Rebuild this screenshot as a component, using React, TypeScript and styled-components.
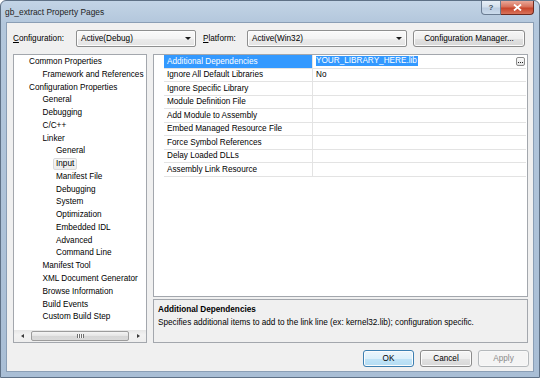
import React from "react";
import styled, { createGlobalStyle } from "styled-components";

const GlobalStyle = createGlobalStyle`
  html, body { margin: 0; padding: 0; background: #ffffff; }
  body { font-family: "Liberation Sans", Arial, sans-serif; font-size: 8.2px; color: #000; }
`;

const Window = styled.div`
  width: 540px;
  height: 378px;
  box-sizing: border-box;
  display: flex;
  flex-direction: column;
  background: linear-gradient(#c3d4e6, #b3c7dc 22px, #a9bed5);
  border: 1px solid #5f7186;
  border-radius: 6px 6px 0 0;
  padding: 0 5px 5px 5px;
`;

const TitleBar = styled.div`
  height: 21px;
  display: flex;
  align-items: center;
  margin: 0 -5px;
  padding-left: 4px;
`;

const Title = styled.div`
  flex: 1;
  font-size: 8.4px;
  color: #1e1e1e;
  padding-top: 1px;
`;

const Caption = styled.div`
  align-self: flex-start;
  display: flex;
  margin-right: 5px;
`;

const CapButton = styled.div<{ $close?: boolean }>`
  height: 14px;
  width: ${(p) => (p.$close ? "33px" : "20px")};
  box-sizing: border-box;
  display: flex;
  align-items: center;
  justify-content: center;
  border: 1px solid ${(p) => (p.$close ? "#6e2a1f" : "#6a7c92")};
  border-top: none;
  border-left: ${(p) => (p.$close ? "none" : undefined)};
  border-radius: ${(p) => (p.$close ? "0 0 4px 0" : "0 0 0 4px")};
  background: ${(p) =>
    p.$close
      ? "linear-gradient(#e9a899, #d8705a 45%, #c7452b 55%, #d9735a)"
      : "linear-gradient(#e8eff7, #d3dfec 45%, #bccde1 55%, #cbdbec)"};
  color: ${(p) => (p.$close ? "#fff" : "#3e4d60")};
  font-size: 8px;
  font-weight: bold;
`;

const Client = styled.div`
  flex: 1;
  display: flex;
  flex-direction: column;
  background: #f0f0f0;
  border: 1px solid #8a9eb5;
  padding: 7px 5px 0 6px;
`;

const ConfigRow = styled.div`
  height: 17px;
  display: flex;
  align-items: center;
`;

const Label = styled.span<{ $w: number }>`
  width: ${(p) => p.$w}px;
  flex-shrink: 0;
  u { text-decoration: underline; }
`;

const Combo = styled.div<{ $w: number }>`
  width: ${(p) => p.$w}px;
  height: 17px;
  box-sizing: border-box;
  display: flex;
  align-items: center;
  padding: 0 4px;
  border: 1px solid #8e8f8f;
  border-radius: 2px;
  background: linear-gradient(#fafafa, #f3f3f3 50%, #ebebeb 50%, #e3e3e3);
  box-shadow: inset 0 0 0 1px #fdfdfd;
`;

const ComboText = styled.span`
  flex: 1;
`;

const Arrow = styled.span`
  width: 0;
  height: 0;
  border-left: 3px solid transparent;
  border-right: 3px solid transparent;
  border-top: 3px solid #1a1a1a;
`;

const PushButton = styled.div<{ $w: number; $default?: boolean; $disabled?: boolean }>`
  width: ${(p) => p.$w}px;
  height: 17px;
  box-sizing: border-box;
  display: flex;
  align-items: center;
  justify-content: center;
  border-radius: 3px;
  border: 1px solid ${(p) => (p.$default ? "#3c7fb1" : p.$disabled ? "#b5b9bc" : "#8b8b8b")};
  background: ${(p) =>
    p.$default
      ? "linear-gradient(#ecf6fc, #dcf0fb 50%, #c2e4f7 50%, #b3dcf3)"
      : p.$disabled
      ? "#f4f4f4"
      : "linear-gradient(#f6f6f6, #eeeeee 50%, #e2e2e2 50%, #d7d7d7)"};
  box-shadow: inset 0 0 0 1px ${(p) => (p.$disabled ? "#f8f8f8" : "#fcfcfc")};
  color: ${(p) => (p.$disabled ? "#8a8a8a" : "#000")};
`;

const Main = styled.div`
  height: 289px;
  margin-top: 7px;
  display: flex;
`;

const TreePanel = styled.div`
  width: 134px;
  box-sizing: border-box;
  border: 1px solid #a3a7ad;
  background: #fff;
  display: flex;
  flex-direction: column;
`;

const TreeList = styled.div`
  flex: 1;
  padding-top: 1px;
`;

const TreeRow = styled.div<{ $level: number }>`
  height: 12.77px;
  line-height: 12.77px;
  padding-left: ${(p) => 15 + p.$level * 13.5}px;
  white-space: nowrap;
`;

const TreeSel = styled.span`
  display: inline-block;
  line-height: 10px;
  padding: 0 2px 0 2px;
  margin-left: -3px;
  border: 1px solid #d9d9d9;
  border-radius: 2px;
  background: linear-gradient(#f8f8f8, #ececec);
`;

const HScroll = styled.div`
  height: 12px;
  display: flex;
  align-items: center;
  background: linear-gradient(#e6e6e6, #f2f2f2 40%, #eeeeee);
  padding: 0 1px;
`;

const ScrollArrow = styled.div<{ $right?: boolean }>`
  width: 14px;
  display: flex;
  justify-content: center;
  &::before {
    content: "";
    border-top: 2.5px solid transparent;
    border-bottom: 2.5px solid transparent;
    ${(p) => (p.$right ? "border-left: 3px solid #3a3a3a;" : "border-right: 3px solid #3a3a3a;")}
  }
`;

const ScrollTrack = styled.div`
  flex: 1;
  height: 10px;
  display: flex;
  padding: 0 2px 0 2px;
`;

const Thumb = styled.div`
  flex: 1;
  box-sizing: border-box;
  border: 1px solid #9c9c9c;
  border-radius: 2px;
  background: linear-gradient(#f4f4f4, #e4e4e4 50%, #d6d6d6 50%, #dadada);
  display: flex;
  align-items: center;
  justify-content: center;
`;

const Grip = styled.div`
  width: 7px;
  height: 4px;
  background: repeating-linear-gradient(90deg, #6f6f6f 0 1px, #f8f8f8 1px 2px);
`;

const RightCol = styled.div`
  flex: 1;
  margin-left: 6px;
  display: flex;
  flex-direction: column;
`;

const Grid = styled.div`
  height: 243px;
  box-sizing: border-box;
  border: 1px solid #a3a7ad;
  background: #fff;
  padding: 0 1px 0 10px;
`;

const GridRow = styled.div`
  height: 13.5px;
  box-sizing: border-box;
  display: flex;
  border-bottom: 1px solid #e3e3e3;
`;

const NameCell = styled.div<{ $selected?: boolean }>`
  width: 149px;
  box-sizing: border-box;
  padding-left: 3px;
  display: flex;
  align-items: center;
  border-right: 1px solid #e3e3e3;
  background: ${(p) => (p.$selected ? "#3399ff" : "transparent")};
  color: ${(p) => (p.$selected ? "#fff" : "#000")};
  white-space: nowrap;
`;

const ValueCell = styled.div`
  flex: 1;
  padding-left: 3px;
  display: flex;
  align-items: center;
`;

const ValueSel = styled.span`
  background: #3399ff;
  color: #fff;
  line-height: 10px;
  padding-right: 1px;
`;

const Ellipsis = styled.div`
  margin-left: auto;
  margin-right: 1px;
  width: 9px;
  height: 9px;
  box-sizing: border-box;
  border: 1px solid #8d8d8d;
  border-radius: 2px;
  background: linear-gradient(#fafafa, #e4e4e4);
  display: flex;
  align-items: flex-end;
  justify-content: center;
  gap: 1px;
  padding-bottom: 1.5px;
`;

const Dot = styled.span`
  width: 1px;
  height: 1px;
  background: #222;
`;

const Desc = styled.div`
  height: 44px;
  margin-top: 2px;
  box-sizing: border-box;
  border: 1px solid #a3a7ad;
  background: #f0f0f0;
  padding: 3px 4px;
  line-height: 13px;
`;

const DescTitle = styled.div`
  font-weight: bold;
`;

const ButtonRow = styled.div`
  margin-top: 7px;
  margin-right: -1px;
  display: flex;
  justify-content: flex-end;
  gap: 6px;
`;

const tree: [number, string][] = [
  [0, "Common Properties"],
  [1, "Framework and References"],
  [0, "Configuration Properties"],
  [1, "General"],
  [1, "Debugging"],
  [1, "C/C++"],
  [1, "Linker"],
  [2, "General"],
  [2, "Input"],
  [2, "Manifest File"],
  [2, "Debugging"],
  [2, "System"],
  [2, "Optimization"],
  [2, "Embedded IDL"],
  [2, "Advanced"],
  [2, "Command Line"],
  [1, "Manifest Tool"],
  [1, "XML Document Generator"],
  [1, "Browse Information"],
  [1, "Build Events"],
  [1, "Custom Build Step"],
];

const props: [string, string][] = [
  ["Additional Dependencies", "YOUR_LIBRARY_HERE.lib"],
  ["Ignore All Default Libraries", "No"],
  ["Ignore Specific Library", ""],
  ["Module Definition File", ""],
  ["Add Module to Assembly", ""],
  ["Embed Managed Resource File", ""],
  ["Force Symbol References", ""],
  ["Delay Loaded DLLs", ""],
  ["Assembly Link Resource", ""],
];

const App: React.FC = () => {
  return (
    <>
      <GlobalStyle />
      <Window>
        <TitleBar>
          <Title>gb_extract Property Pages</Title>
          <Caption>
            <CapButton>?</CapButton>
            <CapButton $close>
              <svg width="9" height="7" viewBox="0 0 9 7">
                <path d="M1 0.5 L8 6.5 M8 0.5 L1 6.5" stroke="#fff" strokeWidth="1.8" />
              </svg>
            </CapButton>
          </Caption>
        </TitleBar>
        <Client>
          <ConfigRow>
            <Label $w={63}>
              <u>C</u>onfiguration:
            </Label>
            <Combo $w={120}>
              <ComboText>Active(Debug)</ComboText>
              <Arrow />
            </Combo>
            <Label $w={44} style={{ paddingLeft: 7 }}>
              <u>P</u>latform:
            </Label>
            <Combo $w={160}>
              <ComboText>Active(Win32)</ComboText>
              <Arrow />
            </Combo>
            <PushButton $w={112} style={{ marginLeft: 6 }}>
              Configuration Manager...
            </PushButton>
          </ConfigRow>
          <Main>
            <TreePanel>
              <TreeList>
                {tree.map(([level, text], i) => (
                  <TreeRow key={i} $level={level}>
                    {i === 8 ? <TreeSel>{text}</TreeSel> : text}
                  </TreeRow>
                ))}
              </TreeList>
              <HScroll>
                <ScrollArrow />
                <ScrollTrack>
                  <Thumb>
                    <Grip />
                  </Thumb>
                </ScrollTrack>
                <ScrollArrow $right />
              </HScroll>
            </TreePanel>
            <RightCol>
              <Grid>
                {props.map(([name, value], i) => (
                  <GridRow key={name}>
                    <NameCell $selected={i === 0}>{name}</NameCell>
                    <ValueCell>
                      {i === 0 ? <ValueSel>{value}</ValueSel> : value}
                      {i === 0 && (
                        <Ellipsis>
                          <Dot />
                          <Dot />
                          <Dot />
                        </Ellipsis>
                      )}
                    </ValueCell>
                  </GridRow>
                ))}
              </Grid>
              <Desc>
                <DescTitle>Additional Dependencies</DescTitle>
                <div>
                  Specifies additional items to add to the link line (ex: kernel32.lib); configuration
                  specific.
                </div>
              </Desc>
            </RightCol>
          </Main>
          <ButtonRow>
            <PushButton $w={51} $default>
              OK
            </PushButton>
            <PushButton $w={52}>Cancel</PushButton>
            <PushButton $w={51} $disabled>
              Apply
            </PushButton>
          </ButtonRow>
        </Client>
      </Window>
    </>
  );
};

export default App;
